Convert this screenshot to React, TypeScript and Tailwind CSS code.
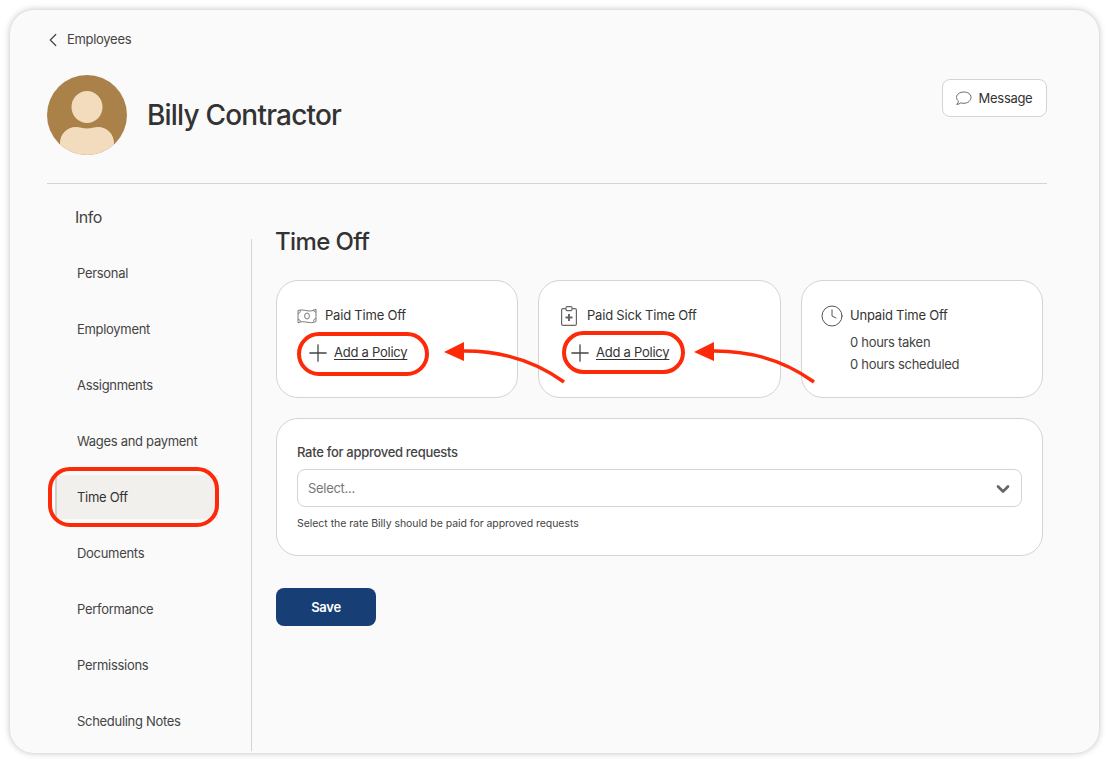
import { ChevronDown, ChevronLeft, Clock, Plus } from 'lucide-react';

const NAV_ITEMS = ['Personal', 'Employment', 'Assignments', 'Wages and payment', 'Time Off', 'Documents', 'Performance', 'Permissions', 'Scheduling Notes'];

function MoneyIcon() {
  return (
    <svg width="20" height="16" viewBox="0 0 20 16" fill="none" stroke="#6b6b6b" strokeWidth="0.9">
      <path d="M1 2.500c3-1 6-.4 9 .2s6 .4 9-1.500v12.300c-3 1.500-6 1.300-9 .7s-6-.9-9 .6z" />
      <ellipse cx="10" cy="8" rx="2.400" ry="3" />
      <path d="M1 5.500c1.400 0 2.400-1.200 2.400-3.200M19 4c-1.300.2-2.400-.8-2.400-2.400M1 11.500c1.400-.2 2.400.8 2.400 2.200M19 10.500c-1.300 0-2.400 1-2.400 3" />
    </svg>
  );
}

function SickIcon() {
  return (
    <svg width="16" height="20" viewBox="0 0 16 20" fill="none" stroke="#666" className="shrink-0">
      <rect x="0.600" y="2.600" width="14.800" height="16.800" rx="1.500" strokeWidth="1.200" />
      <rect x="5" y="0.600" width="6" height="4" rx="1" fill="#fff" strokeWidth="1.100" />
      <path d="M8 8v7M4.500 11.500h7" strokeWidth="2" />
    </svg>
  );
}

function BubbleIcon() {
  return (
    <svg width="17" height="15" viewBox="0 0 17 15" fill="none" stroke="#666" strokeWidth="1">
      <path d="M8.8 1C4.8 1 1.500 3.300 1.500 6.400c0 1.500.8 2.800 2 3.800-.2 1.100-.8 2.200-1.800 3.200 1.600 0 3-.6 4-1.500 1 .3 2 .4 3.100.4 4 0 7.200-2.600 7.200-5.900S12.800 1 8.800 1z" />
    </svg>
  );
}

function Avatar() {
  return (
    <svg width="80" height="80" viewBox="0 0 80 80" className="shrink-0">
      <clipPath id="avatar-clip">
        <circle cx="40" cy="40" r="40" />
      </clipPath>
      <g clipPath="url(#avatar-clip)">
        <rect width="80" height="80" fill="#a98149" />
        <ellipse cx="40" cy="32" rx="15.500" ry="16" fill="#f3dcbe" />
        <path d="M13 80V68c0-9 7-16 16-16 4 0 7 1.500 11 1.500S47 52 51 52c9 0 16 7 16 16v12z" fill="#f3dcbe" />
      </g>
    </svg>
  );
}

function AddPolicy() {
  return (
    <div className="mt-[15px] flex h-[24px] items-center gap-[2px] pl-[7px] text-[13px] tracking-[-0.25px] text-[#333]">
      <Plus size={28} strokeWidth={1.1} color="#444" />
      <span className="underline underline-offset-2">Add a Policy</span>
    </div>
  );
}

function Annotations() {
  return (
    <svg width="1109" height="763" viewBox="0 0 1109 763" fill="none" className="absolute left-0 top-0 pointer-events-none">
      <rect x="50" y="469" width="167" height="56" rx="20" stroke="#fc2a08" strokeWidth="4" />
      <rect x="299" y="334" width="128" height="40" rx="20" stroke="#fc2a08" strokeWidth="4" />
      <rect x="564" y="333" width="119" height="39" rx="19.500" stroke="#fc2a08" strokeWidth="4" />
      <path d="M460 351c40-1 75 10 104 31" stroke="#fc2a08" strokeWidth="3.500" />
      <path d="M444 352l20-10v19z" fill="#fc2a08" />
      <path d="M710 351c40-1 75 10 104 31" stroke="#fc2a08" strokeWidth="3.500" />
      <path d="M694 352l20-10v19z" fill="#fc2a08" />
    </svg>
  );
}

export default function App() {
  return (
    <div className="relative h-[763px] w-[1109px] overflow-hidden bg-white p-[10px] font-['Inter',sans-serif] tracking-[-0.3px] text-[#333]">
      <div className="h-[743px] rounded-[24px] bg-[#fafafa] pl-[37px] pr-[52px] shadow-[0_0_6px_rgba(60,65,80,0.35)]">
        <div className="flex h-[58px] items-center pt-[1px] text-[13px] text-[#444]">
          <ChevronLeft size={22} strokeWidth={1.3} className="-ml-[5px] mr-[3px]" />
          Employees
        </div>

        <div className="flex h-[116px] items-start border-b border-[#d4d4d4] pt-[7px]">
          <Avatar />
          <h1 className="ml-[20px] mt-[20px] text-[28px] font-medium leading-[40px] tracking-[-0.8px] text-[#333]">Billy Contractor</h1>
          <button className="ml-auto mt-[4px] flex h-[38px] w-[105px] items-center justify-center gap-[7px] rounded-[8px] border border-[#d4d4d4] bg-white pr-[2px] pt-[1px] text-[13px] text-[#333]">
            <BubbleIcon />
            Message
          </button>
        </div>

        <div className="flex">
          <div className="w-[205px] shrink-0">
            <div className="h-[55px] pl-[28px] pt-[21px] text-[16px] leading-[24px] tracking-[-0.5px] text-[#444]">Info</div>
            <nav className="flex h-[512px] flex-col gap-[12px] border-r border-[#d4d4d4] pl-[8px] pr-[33px] pt-[12px]">
              {NAV_ITEMS.map((item) => (
                <div
                  key={item}
                  className={
                    item === 'Time Off'
                      ? 'flex h-[44px] shrink-0 items-center border-l-2 border-[#d0d0d0] bg-[#f1f0ec] pl-[20px] pt-[1px] text-[13px] text-[#333]'
                      : 'flex h-[44px] shrink-0 items-center pl-[22px] pt-[1px] text-[13px] text-[#444]'
                  }
                >
                  {item}
                </div>
              ))}
            </nav>
          </div>

          <main className="min-w-0 flex-1 pl-[24px] pr-[4px]">
            <h2 className="-ml-[1px] mt-[40px] text-[24px] font-medium leading-[36px] tracking-[-0.6px] text-[#333]">Time Off</h2>

            <div className="mt-[20px] grid grid-cols-[242px_243px_242px] gap-x-[20px]">
              <div className="h-[118px] rounded-[22px] border border-[#d4d4d4] bg-white pl-[20px] pt-[25px]">
                <div className="flex h-[20px] items-center gap-[8px] text-[13px] tracking-[-0.2px] text-[#333]">
                  <MoneyIcon />
                  Paid Time Off
                </div>
                <AddPolicy />
              </div>
              <div className="h-[118px] rounded-[22px] border border-[#d4d4d4] bg-white pl-[22px] pt-[25px]">
                <div className="flex h-[20px] items-center gap-[10px] text-[13px] tracking-[-0.2px] text-[#333]">
                  <SickIcon />
                  Paid Sick Time Off
                </div>
                <div className="-ml-[2px]">
                  <AddPolicy />
                </div>
              </div>
              <div className="h-[118px] rounded-[22px] border border-[#d4d4d4] bg-white pl-[20px] pt-[25px]">
                <div className="flex h-[20px] items-center gap-[6px] text-[13px] tracking-[-0.2px] text-[#333]">
                  <Clock size={24} strokeWidth={1} color="#555" className="-ml-[2px]" />
                  Unpaid Time Off
                </div>
                <div className="mt-[5px] pl-[28px] text-[13px] leading-[22px] text-[#444]">
                  <div>0 hours taken</div>
                  <div>0 hours scheduled</div>
                </div>
              </div>
            </div>

            <section className="mt-[20px] h-[138px] rounded-[22px] border border-[#d4d4d4] bg-white px-[20px] pt-[23px]">
              <div className="text-[13px] font-medium leading-[20px] text-[#444]">Rate for approved requests</div>
              <div className="mt-[7px] flex h-[38px] items-center justify-between rounded-[8px] border border-[#d4d4d4] bg-white pl-[10px] pr-[8px] pt-[1px] text-[13px] text-[#777]">
                Select...
                <ChevronDown size={20} strokeWidth={3.2} color="#666" />
              </div>
              <div className="mt-[10px] text-[10.500px] leading-[14px] tracking-[-0.04px] text-[#444]">Select the rate Billy should be paid for approved requests</div>
            </section>

            <button className="mt-[32px] h-[38px] w-[100px] rounded-[8px] bg-[#173f75] pt-[1px] text-[13px] font-semibold text-white">Save</button>
          </main>
        </div>
      </div>
      <Annotations />
    </div>
  );
}
